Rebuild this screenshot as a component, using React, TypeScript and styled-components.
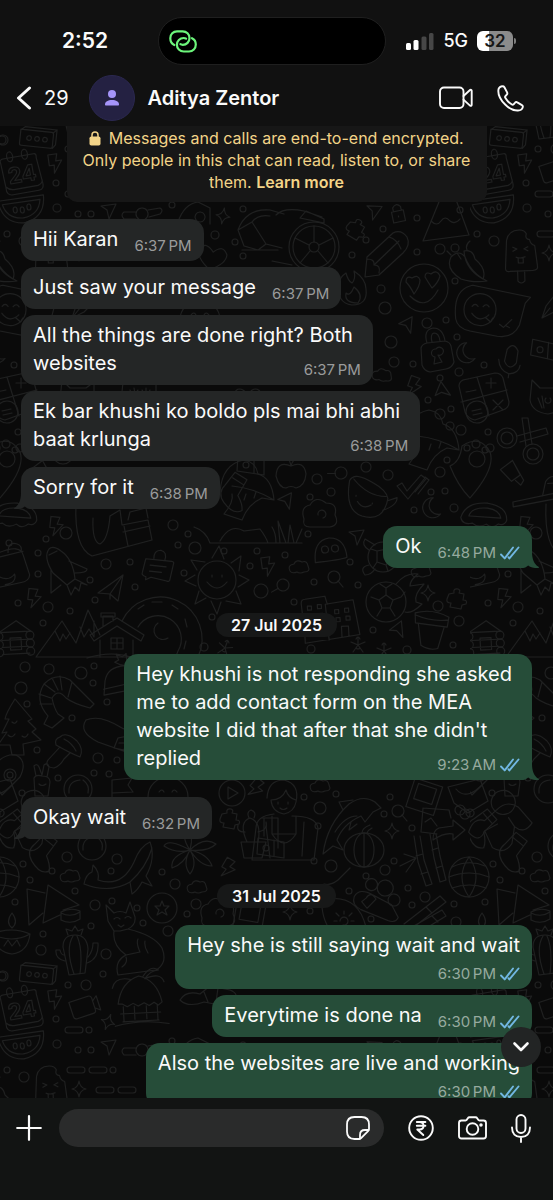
import React from "react";
import styled, { createGlobalStyle, css } from "styled-components";

const GlobalStyle = createGlobalStyle`
  * { box-sizing: border-box; }
  html, body, #root { height: 100%; }
  body {
    margin: 0;
    background: #111111;
    color: #fafafa;
    font-family: Inter, "Liberation Sans", sans-serif;
  }
  button { font: inherit; color: inherit; }
`;

const Screen = styled.div`
  display: grid;
  grid-template-rows: auto minmax(0, 1fr) auto;
  height: 100vh;
  overflow: hidden;
`;

/* ---------- top ---------- */

const Top = styled.header`
  background: #111111;
`;

const StatusBar = styled.div`
  display: grid;
  grid-template-columns: 1fr 228px 1fr;
  align-items: center;
  padding: 17px 10px 0 0;
`;

const Clock = styled.time`
  padding-left: 62px;
  font-size: 21px;
  font-weight: 600;
  line-height: 28px;
`;

const Island = styled.div`
  display: flex;
  align-items: center;
  height: 48px;
  padding-left: 10px;
  border: 1px solid #1f1f1f;
  border-radius: 24px;
  background: #000000;
`;

const Signals = styled.div`
  display: flex;
  align-items: center;
  justify-content: flex-end;
  gap: 9px;
  padding-right: 27px;
  font-size: 18px;
  font-weight: 500;
  line-height: 24px;
`;

const Battery = styled.div`
  display: flex;
  align-items: center;
  gap: 1px;
  &::after {
    content: "";
    width: 2px;
    height: 6px;
    border-radius: 0 2px 2px 0;
    background: #7d7d7d;
  }
`;

const Charge = styled.span`
  width: 36px;
  height: 20px;
  border-radius: 6px;
  background: linear-gradient(to right, #ffffff 32%, #8b8b8b 32%);
  color: #161616;
  font-size: 17px;
  font-weight: 600;
  line-height: 20px;
  text-align: center;
`;

const ChatHeader = styled.div`
  display: flex;
  align-items: center;
  height: 61px;
  padding: 5px 29px 0 16px;
`;

const IconButton = styled.button`
  display: flex;
  flex: none;
  align-items: center;
  padding: 0;
  border: 0;
  background: none;
  cursor: pointer;
`;

const BackButton = styled(IconButton)`
  gap: 12px;
  font-size: 20px;
  line-height: 28px;
`;

const Avatar = styled.div`
  display: flex;
  flex: none;
  align-items: center;
  justify-content: center;
  width: 46px;
  height: 46px;
  margin: 0 13px 0 20px;
  border: 1px solid #2b2850;
  border-radius: 50%;
  background: #242142;
`;

const ContactName = styled.h1`
  flex: 1;
  margin: 0;
  font-size: 20px;
  font-weight: 600;
  line-height: 28px;
  white-space: nowrap;
`;

const CallActions = styled.div`
  display: flex;
  align-items: center;
  gap: 24px;
`;

/* ---------- conversation ---------- */

const Chat = styled.main`
  position: relative;
  display: grid;
  min-height: 0;
  overflow: hidden;
  background: #0a0a0a;
`;

const Wallpaper = styled.svg`
  grid-area: 1 / 1;
  width: 100%;
  height: 100%;
`;

const Thread = styled.div`
  z-index: 0;
  grid-area: 1 / 1;
  display: flex;
  flex-direction: column;
  height: 0;
  padding: 0 21px;
`;

const Notice = styled.p`
  align-self: center;
  width: 420px;
  max-width: 100%;
  margin: 0 0 17px;
  padding: 1px 12px 9px;
  border-radius: 0 0 10px 10px;
  background: #171717;
  color: #f3d488;
  font-size: 16px;
  line-height: 22px;
  text-align: center;
  a {
    color: inherit;
    font-weight: 600;
    text-decoration: none;
  }
  svg {
    margin-right: 3px;
    vertical-align: -2px;
  }
`;

const DayPill = styled.div`
  align-self: center;
  margin: 45px 0 0;
  padding: 0 15px;
  border-radius: 12px;
  background: #171818;
  font-size: 16px;
  font-weight: 600;
  line-height: 24px;
`;

type Placement = "beside" | "inside" | "below";

const Bubble = styled.article<{ $mine?: boolean; $place: Placement; $first?: boolean }>`
  position: relative;
  flex: none;
  align-self: ${(p) => (p.$mine ? "flex-end" : "flex-start")};
  margin-top: ${(p) => (p.$first ? 17 : 6)}px;
  padding: 6px 12px;
  border-radius: 14px;
  background: ${(p) => (p.$mine ? "#264d39" : "#242626")};
  font-size: 20px;
  line-height: 28px;
  white-space: pre;
  ${Notice} + & { margin-top: 0; }
  ${(p) =>
    p.$place === "beside" &&
    css`
      display: flex;
      align-items: flex-end;
      gap: 16px;
    `}
  ${(p) =>
    p.$place === "inside" &&
    css`
      display: grid;
      & > * { grid-area: 1 / 1; }
      & > p { padding-right: 8px; }
    `}
  ${(p) =>
    p.$place === "below" &&
    css`
      display: flex;
      flex-direction: column;
      gap: 4px;
    `}
`;

const Words = styled.p`
  margin: 0 0 2px;
`;

const Line = styled.span`
  display: block;
`;

const Meta = styled.div<{ $mine?: boolean }>`
  display: flex;
  align-items: center;
  align-self: flex-end;
  justify-self: end;
  gap: 4px;
  color: ${(p) => (p.$mine ? "#96aa9f" : "#9a9b9b")};
  font-size: 15px;
  line-height: 18px;
`;

const Tail = styled.svg<{ $mine?: boolean }>`
  position: absolute;
  bottom: 0;
  ${(p) => (p.$mine ? "right: -7px;" : "left: -7px; transform: scaleX(-1);")}
`;

const JumpButton = styled.button`
  position: absolute;
  right: 12px;
  bottom: 31px;
  z-index: 1;
  display: flex;
  align-items: center;
  justify-content: center;
  width: 40px;
  height: 40px;
  padding: 0;
  border: 0;
  border-radius: 50%;
  background: #222424;
  cursor: pointer;
`;

/* ---------- composer ---------- */

const Composer = styled.footer`
  display: flex;
  align-items: center;
  gap: 24px;
  padding: 11px 22px 53px 16px;
  background: #121413;
`;

const Field = styled.div`
  display: flex;
  flex: 1;
  align-items: center;
  min-width: 0;
  height: 38px;
  margin-left: -7px;
  padding: 0 14px 0 16px;
  border-radius: 19px;
  background: #2a2b2b;
`;

const MessageInput = styled.input`
  flex: 1;
  min-width: 0;
  padding: 0;
  border: 0;
  outline: 0;
  background: none;
  color: inherit;
  font: inherit;
`;

/* ---------- wallpaper doodles ---------- */

const shapes: Record<string, React.ReactNode> = {
  box: <><path d="M-18-8 L13-8 Q15-8 15-6 L15 6 Q15 8 13 8 L-16 8 Q-18 8-18 6Z M-17-8 L-14-11 L18-11 L18 4 L15 8 M15-8 L18-11" /><circle cx="-9" r="2.3" /><circle cx="-1" r="2.3" /><circle cx="7" r="2.3" /></>,
  calendar: <><path d="M-19-15 Q-20-19-16-19 L15-19 Q18-19 17-15 L19 10 Q20 18 14 18 L-12 18 Q-19 18-18 10Z M-18 9 Q-15 13-9 13 L14 13 Q19 12 19 8" /><ellipse cx="-9" cy="-20" rx="3" ry="5" /><ellipse cx="6" cy="-20" rx="3" ry="5" /><text x="-14" y="7" fontSize="22" fontWeight="700">24</text></>,
  bolt: <path d="M-6-9 L3-9 L1-2 L7-2 L-2 10 L-1 2 L-6 2Z" />,
  melon: <><path d="M-23-10 L23-10 Q22 13 0 15 Q-21 13-23-10Z M-19-6 L19-6 Q16 9 0 10 Q-16 9-19-6" /><ellipse cx="-7" cy="1" rx="2" ry="3" /><ellipse cy="2" rx="2" ry="3" /><ellipse cx="7" cy="0" rx="2" ry="3" /></>,
  camera: <path d="M-13-9 H7 Q10-9 10-6 V6 Q10 9 7 9 H-10 Q-13 9-13 6Z M10-3 L15-7 V8 L10 4" />,
  sparkle: <path d="M0-8 Q1-1 7 0 Q1 1 0 8 Q-1 1-7 0 Q-1-1 0-8Z" />,
  pill: <rect x="-9" y="-3" width="18" height="6" rx="3" />,
  nav: <path d="M-7-5 L8-7 L1 8 L-1-1Z" />,
  hut: <path d="M-22 2 Q-18-20 0-25 Q18-20 22 2 L18 5 L14 2 L9 5 L4 2 L-2 5 L-7 2 L-13 5 L-18 2Z M-17 5 V20 M17 5 V20 M-20 12 H20 M-18 20 H18 M-6 5 V18 M6 5 V18 M-26 24 Q0 18 28 24 M4-24 Q12-36 20-30 Q12-30 6-22 M6-22 Q22-28 25-18 M-8-22 Q-24-26-27-14" />,
  bone: <path d="M-18-2 H-6 M-18 5 H-6 M-18-2 Q-22 1-18 5 M6-4 L18-6 Q22-4 18 0 L7 3 M0-6 A6 6 0 1 0 .1-6" />,
  popsicle: <path d="M-15 14 L-13-14 Q-11-24 0-24 Q5-24 7-20 Q5-15 10-14 Q11-9 15-8 L17 12 Q18 17 12 17 L-10 17 Q-15 18-15 14Z M-3 17 V27 Q0 31 4 27 V17 M-7-7 L-3-5 L-7-3 M8-7 L4-5 L8-3 M-4 3 Q0 5 5 3 M-2 4 V9 H3 V4" />,
  fox: <path d="M-30-38 L-22-30 Q-16-33-10-30 L-6-41 L-1-26 Q0-18-8-14 Q18-8 26 5 Q32 20 20 27 L-18 32 Q-22 18-10 12 L4 9 M-30-38 L-28-22 L-22-12 L-16-12 L-8-14 M-22-12 Q-24 2-10 12 M-14 24 Q-8 20-10 14 M-22-24 Q-19-27-16-24 M-11-25 Q-8-28-5-25 M4 9 Q0 0 2-4 M12 10 Q8 4 9-2 M-18-18 L-15-16 L-12-18" />,
  cactus: <path d="M-8 22 L-14-6 Q-14-18-2-18 Q10-18 11-4 L8 20Z M-3 21 Q-12-4-4-17 M3 21 Q6-4 0-17 M-12 8 Q-22 6-21-3 L-17-3 Q-16 2-13 2 M11 4 Q16-2 16-10 L21-10 Q22 6 10 10 M-9-18 L-11-24 L-5-22 L-2-27 L1-22 L6-24 L4-18" />,
  lamp: <path d="M-20-4 Q0-12 18-4 Q16 14 0 16 Q-16 14-20-4Z M-20-4 Q0 6 18-4 M0-10 Q-7-16 0-25 Q7-16 0-10 M-8 8 L-4 2 L0 8 L5 2 L8 8" />,
  kites: <path d="M-22-16 L-4-12 M-22-16 L-20 20 L-6 8 M-1-20 L-6 18 L11 10 M-1-20 L30 0 L14 5 M12 7 Q22 2 31 6 L31 14 Q22 20 12 15Z M12 8 Q22 13 31 7" />,
  globe: <><circle r="20" /><path d="M-20 0 Q0-8 20 0 M-17-10 Q0-18 16-11 M-17 11 Q0 5 17 11 M0-20 Q-14 0 0 20 M0-20 Q14 0 0 20" /></>,
  coin: <><circle r="15" /><path d="M0-7 L2-2 L7-2 L3 2 L5 7 L0 4 L-5 7 L-3 2 L-7-2 L-2-2Z" /></>,
  whale: <path d="M-38 16 Q-36 6-30 4 L-29-3 Q-22 4-24 12 Q0 20 12-6 Q18-22 28-26 Q34-10 24 8 L30 18 L20 14 Q16 22 10 26 L8 14 Q-12 26-38 16Z M30-20 Q24 0 8 14" />,
  cloud: <path d="M-9 4 Q-12-2-5-3 Q-3-8 3-5 Q8-7 9-1 Q12 5 5 5 Q1 7-2 5 Q-7 7-9 4Z" />,
  leaves: <path d="M0 0 Q-22-12-26-4 Q-14 4 0 0 Q-20 6-18 18 Q-6 14 0 0 Q-8 14 0 24 Q8 14 0 0 Q10 16 22 16 Q18 4 0 0 Q18 2 26-6 Q14-14 0 0 Q4-16-2-24 Q-10-14 0 0" />,
  boot: <path d="M-32-34 Q-34 10-16 18 L44 2 L40-18 L14-13 L12-28 L2-22 Q0 2-8 6 Q-16 4-15-20 M16-12 L20 8 M15-6 L42-12 M20-18 L22-26 L38-30 L40-20" />,
  plane: <path d="M-16-24 Q-22-16-12 0 L2 12 L10 6 Q8-14-4-22 Q-12-28-16-24Z M-14-4 L-14 20 L-4 12 M4-12 L22-4 Q22 0 10 0 M2 12 L6 22 L10 14 L14 18 L16 10 L22 12 L10 6 M-16-18 Q-12-20-8-22" />,
  paper: <path d="M-14 5 L11-13 L6 13 L-2 6Z M11-13 L-2 6 V11" />,
  note: <path d="M-13-7 L13-7 Q16-7 15-4 L13 12 Q12 14 10 13 L-6 11 L-11 14 L-11 11 Q-16 10-15 7Z M-5-8 Q-6-16 1-17 Q8-16 6-7 M-8-1 H8 M-8 5 H4" />,
  sun: <><circle r="19" /><path d="M-5-22 L2-34 L7-21 M14-17 L24-24 L22-9 M22-5 L32 0 L21 7 M19 11 L24 24 L9 21 M4 22 L0 34 L-6 21 M-11 18 L-22 24 L-18 11 M-21 6 L-32 1 L-22-5 M-20-10 L-26-20 L-12-18 M-10 2 Q0 14 10 2 M-5-5 V-3 M5-5 V-3" /></>,
  bag: <path d="M-15-14 Q8-22 10-10 L15 10 Q14 16 6 17 L-15 20 M-14-10 L10-14 M-5-14 Q-4-25 4-22 Q10-20 8-14 M-15 10 Q-6 15 0 8 Q2 17-10 18" />,
  cabin: <><path d="M-14-6 L4-17 L18-6 M-13-6 H17 M-11 2 H15 M-11 9 H15 M-11 16 H16 M-3 0 H8 V12 H-3Z" /><circle cx="-14" cy="-2" r="4" /><circle cx="-14" cy="6" r="4" /><circle cx="-14" cy="14" r="4" /><circle cx="17" cy="-2" r="4" /><circle cx="17" cy="6" r="4" /><circle cx="17" cy="14" r="4" /></>,
  peaks: <path d="M-36 22 L-10-14 L4 8 L16-25 L28 0 M-17-4 L-12 6 L-9-1 L-6 4 L-2-2 M8-8 L12 2 L17-6 L22 2 L22-14 M-36 22 H60" />,
  house: <path d="M-27-3 L0-20 L27-3 L24 3 L0-12 L-23 3Z M-17 2 V19 M16 2 V19 M-14-12 V-22 H-4 V-17 M-16-25 H-2 V-21 H-16Z M-6 0 H6 V11 H-6Z M0 0 V11 M-6 5 H6 M-30 20 Q-4 12 16 20" />,
  arch: <path d="M-36-10 A39 39 0 0 1 40 26 M-20-4 A22 22 0 0 1 20 20 L17 28 M-20-22 L-14-26 M-6-29 H4 M14-26 L20-22 M27-12 L29-4 M28 10 L26 18 M0-8 A9 9 0 1 0 10 7 A8 8 0 0 1 0-8" />,
  shrimp: <path d="M-12 14 Q-26-2-16-18 Q-4-30 10-22 L34 2 L30 6 Q14 2 6-4 Q-2-14-8-4 Q-6 6-2 12 M-16-18 L-5-10 M-8-24 L-2-12 M0-26 L2-12 M-21-8 L-9-4 M-20 2 L-8 2 M-12 14 L-16 22 L-8 26 L4 16 L-2 12 M12-20 L8-5" />,
  beanie: <><path d="M-17 14 L-15 0 Q-12-14 6-14 Q22-14 22 8 M-17 8 L22 2 M-17 14 L22 9" /><path d="M2-15 L-4-18 L0-20 L-2-26 L4-23 L8-26 L8-20 L12-18 L6-14Z" /></>,
  pine: <path d="M-5-28 Q-14-14-15-8 L-11-8 L-18 6 L-13 5 L-22 18 L-10 18 L-8 28 H4 L3 17 L21 13 L12 5 L16 2 L8-6 L12-8Z M-8-5 Q-5-2-3-6 M-12 8 Q-8 12-5 7 M2 9 Q6 12 8 7" />,
  mushroom: <path d="M-2-14 Q4-20 15-10 Q22-2 18 6 Q8 2-6-6 Q-8-12-2-14Z M-2-4 L-14 9 Q-18 16-8 17 Q-2 15 2 8 L8 2 M2-12 Q10-8 14 0" />,
  board: <path d="M-36-18 Q-22-24 0-10 L38 8 M-36-18 Q-44-6-24 4 L38 26 M-4 0 L6-2 L2 12 L-8 10Z M-3 5 H4" />,
  pin: <><path d="M-20-4 Q-8-22 6-20 Q18-14 10 2 L-8 20 L-12 14" /><circle r="6" /><circle r="3" /></>,
  peace: <path d="M-7 14 L-8-4 Q-6-8 0-6 Q8-6 8 0 L6 14Z M-6-6 L-8-16 Q-5-19-3-15 L0-7 L2-17 Q6-20 7-15 L5-5 M-3 2 Q0 5 4 2" />,
  ball: <><circle r="14" /><path d="M-9 4 Q-10-8 2-9 M5-9 Q12-4 10 4" /></>,
  flag: <path d="M-10 14 V-7 L10-9 L6-2 L11 5 L-10 6" />,
  smile: <><circle r="20" /><path d="M-10 2 Q0 14 10 2 M-9-5 Q-6-9-4-5 M4-5 Q6-9 9-5" /></>,
  play: <><circle r="13" /><path d="M-4-6 L6 0 L-4 6Z" /></>,
  sock: <path d="M-8-18 L6-16 L4 2 Q12 8 14 14 Q8 22-6 14 Q-16 8-12-2Z M-8-12 L5-10" />,
  pots: <path d="M-13 14 L-10 30 H8 L12 14Z M-7 14 Q-16-6-4-10 Q8-6 4 14 M4 4 Q14 2 12-6 M-9 4 Q-18 4-16-3 M-5-10 Q-8-16-3-18 Q3-16 0-10 M8-10 H24 V20 M10-10 V8" />,
  helmet: <><path d="M-16 12 Q-16-10 0-11 Q16-10 16 10 Q10 12-16 12Z" /><circle cx="-5" cy="0" r="3.5" /><circle cx="5" cy="0" r="3.5" /></>,
  lens: <><circle r="6" /><path d="M4 4 L9 10" /></>,
  turtle: <><circle r="15" /><path d="M-8-12 L-18-18 Q-22-12-14-7 M-14 8 Q-24 10-18 18 Q-12 18-8 12 M-6-6 L4-8 L9 0 L3 8 L-6 5Z M-6-6 L-12-8 M4-8 L6-13 M-6 5 L-10 11 M3 8 L5 14" /></>,
  soccer: <><circle r="20" /><path d="M0-7 L7-2 L4 6 L-4 6 L-7-2Z M0-7 V-14 M7-2 L15-5 M4 6 L9 14 M-4 6 L-9 14 M-7-2 L-15-5 M-6-18 L0-14 L6-18 M15-5 L19-10 M10-18 Q20-30 32-28 Q24-22 24-16 L38-18 Q28-8 30 0 L36 2 Q26 12 19 10" /></>,
  blocks: <path d="M-26 18 L-28-16 Q-28-20-24-20 L-4-22 L-2-14 M-2 22 L-4-14 L24-17 L29 18 L-26 24 V18 M-22-13 h4 v4 h-4Z M-12-14 h4 v4 h-4Z M-21-4 h4 v4 h-4Z M-11-5 h4 v4 h-4Z M5-8 h4 v4 h-4Z M15-9 h4 v4 h-4Z M6 0 h4 v4 h-4Z M16-1 h4 v4 h-4Z M11 20 V9 H18 V19" />,
  pot: <path d="M-17-16 Q0-22 17-14 L16-4 L-16-6Z M-13-5 L-9 16 Q0 21 8 18 L13-4 M-17-14 Q0-8 16-11" />,
  puzzle: <path d="M-7-6 L-2-7 Q-3-12 2-11 Q5-10 3-7 L8-6 L7 0 Q12 0 10 4 L6 5 L5 9 L-6 7 L-5 3 Q-10 3-9-1Z" />,
  flower: <path d="M0 0 V-8 M0 0 L7-3 M0 0 L5 7 M0 0 L-5 7 M0 0 L-7-3 M-2-6 Q0-10 2-6 M-2 3 Q0 5 2 3" />,
  girl: <path d="M-13-24 Q-12-42 4-42 Q20-38 16-20 Q14-10 4-8 Q-8-10-9-22 Q2-22 6-32 Q8-24 16-22 M-6-8 Q-24-6-24 6 L-28 38 H34 L38 6 Q36-6 12-6 M-8-6 V12 H16 V-6 M-8 12 Q4 30 16 12 M-14 4 L-10 36 M24 0 L22 34 M-2-20 V-18 M8-20 V-18 M0-14 Q3-11 7-14" />,
  dolphin: <path d="M-24 34 Q-20 4 2-16 Q16-26 28-18 L34-12 L26-8 L18 2 L14-4 Q-4 4-10 20 L-4 30 L-14 26Z M-4-10 L-8-18 L6-20 M10-4 Q-2-4-12 12 M4 2 L2 10 L10 4" />,
  photo: <path d="M-15-14 L14-14 V16 H-15Z M-10-10 H9 V6 H-10Z" />,
  share: <path d="M-16-14 L10-12 L12-4 M-16-14 L-18 10 L-2 12 M-14 0 L-8-4 L-2 4 M0 6 L14 4 V-2 L26 8 L14 18 V12 Q6 10-6 18 Q-6 8 0 6Z" />,
  pumpkin: <><ellipse rx="20" ry="17" /><ellipse rx="10" ry="17" /><path d="M0-17 V17 M-2-17 Q-2-22 6-25 M3-17 Q4-20 8-22 M-14 18 L-26 30 M-26 30 Q-34 36-40 34" /></>,
  gift: <path d="M-20-6 L12-14 L20 8 L0 20 L-14 10 M-20-6 L-14 10 M-12-4 Q-2 8 14-8 M-8 12 a5 5 0 1 0 .1 0 M2 16 a4 4 0 1 0 .1 0" />,
  runner: <path d="M-30 0 Q-22-14-12-8 L2-16 Q14-24 24-14 L34 4 Q24 14 16 4 L10 20 Q0 30-10 20 L-14 2 Q-22 14-30 0Z M10-34 a12 12 0 1 0 .1 0 M-14 2 L0-2 M16 4 L12-6" />,
  bamboo: <path d="M-10-26 L-6 0 L2 24 L8 22 L0-2 L-4-26 M6-28 L10-4 L16 20 L22 18 L16-6 L12-28 M-8-6 L-1-8 M-3 12 L4 10 M8-12 L14-14 M12 6 L18 4 M-8-4 L-20-8 M-8-4 L-24 4 M-8-4 L-18 10" />,
  hand: <><path d="M-30 0 Q-26-10-12-4 L8 4 L16 16 Q14 22 6 20 L-22 12 Q-32 8-30 0Z M-18 0 Q-14-8-8 0 L-16 10 L-22 4Z" /><circle cx="-14" cy="-14" r="6" /><circle cx="0" cy="-12" r="8" /><circle cx="10" cy="-1" r="6" /></>,
  pencils: <path d="M-28 14 L8-14 L14-8 L-18 17 M-20 17 L10 0 L14 6 L-4 17 M-6-3 L0 3 M0 6 L6 12" />,
  ray: <><path d="M-4 0 a4 4 0 1 1 3 4 M0-7 V-10 M7 0 H10 M5-5 L8-8 M-5-5 L-8-8 M-7 0 H-10 M-5 5 L-8 8 M5 5 L8 8" /><path d="M-22-14 Q-20 6-8 14 M-16-22 Q14-26 22 6" /></>,
  wheel: <><circle r="25" /><circle r="21" /><circle r="5" /><path d="M0-5 V-21 M5-2 L19-9 M4 4 L14 16 M-4 4 L-14 16 M-5-2 L-19-9 M-42 14 L-22 18 M-38-32 Q-30-40-10-36 L8-30 M-8-36 L10-28 V-24 L-14-29Z" /></>,
  lock: <><path d="M-15-6 Q-14-10-9-11 L9-13 Q14-12 15-8 L18 8 Q16 14 10 15 L-6 18 Q-12 17-14 11Z M-9-11 Q-13-24-3-26 Q7-26 9-13 M-4-12 Q-6-20-2-21 Q3-21 4-13" /><path d="M0-5 a4 4 0 1 1 2 6 L6 8 L-2 10 L-1 3 A4 4 0 0 1 0-5" /></>,
  lockS: <path d="M-6-3 H6 V8 H-6Z M-4-3 V-7 Q0-12 4-7 V-3 M0 2 V3" />,
  mountain: <path d="M-22 22 L-4-22 H10 L24 16 L-22 22 M-14 2 Q-8 8-4 2 Q0-4 5 2 Q10 6 15 0 M-2-22 L-1-28 M8-22 L7-28" />,
  pencil: <path d="M-22 24 L-20 4 L6-20 Q14-24 20-16 Q24-8 16 0 L-8 22Z M-20 6 Q-12 6-13 12 Q-6 12-8 20 M-13 12 L12-12 M2-16 Q10-14 14-4" />,
  chili: <path d="M-16-8 Q-22 4-6 14 Q6 18 20 16 Q4 8-2-8 Q-8-16-16-8Z M-3-14 Q-2 4 16 14 Q20 4 8-6 Q6-16-3-14Z M-16-10 L-20-14 M0-15 Q-2-20 3-24 M-10-12 L-6-6" />,
  hearts: <><circle r="24" /><path d="M-10 6 Q-14-2-18-6 Q-18-13-12-10 Q-6-14-4-8 Q-4-2-10 6Z M8 0 Q4-6 1-11 Q1-17 7-14 Q13-19 16-12 Q14-5 8 0Z M-14 8 Q2 24 14 2" /></>,
  chat: <><path d="M-36 10 Q-40-20-20-24 L38-14 L33-8 L28 14 Q22 28 6 26 L-20 22 Q-34 20-36 10Z M8 14 L12 17 L20 9 M14 15 L18 17" /><circle cx="-12" r="16" /><path d="M-20 4 Q-12 14-3 5 M-6 8 L-1 12 L1 8 M-20-3 Q-17-7-14-3 M-9-3 Q-6-7-3-3" /></>,
  flame: <path d="M0-18 Q12-10 12 0 Q14 16-2 16 Q-18 14-15-6 Q-14-12-8-16 Q-6-8-2-6 Q2-10 0-18Z M0-2 Q10 6 4 14 Q-10 14-8 4 Q-4 8 0-2" />,
  moon: <path d="M-2-9 A10 10 0 1 0 9 5 A9 9 0 0 1-2-9Z" />,
  mic: <path d="M-5-8 Q0-17 6-8 V4 Q0 14-6 4Z M-12 3 Q-10 14 0 16 Q10 14 10 6 M0 16 V20" />,
  calc: <><path d="M-24-12 Q-24-16-20-18 L12-25 Q18-25 20-20 L26 4 Q26 10 20 12 L-8 22 Q-16 20-18 14Z M-6-21 L6 18 M-22 4 L24-8 M-17-6 L-7-8 M3-15 H13 M8-20 V-10 M10 2 L20 12 M20 2 L10 12" /><circle cx="-6" cy="14" r="11" /><path d="M-11 13 L-2 11 M-10 17 L-1 15" /></>,
  cap: <path d="M-20 4 Q-18-24 4-28 Q16-26 18-14 Q32-10 34 12 Q14 0-8-2 M-8 6 Q-6 14-16 26 L2 32 Q8 16 22 10 L34 12 M4 12 L6 6 M14 10 L16 4" />,
  paw: <><path d="M-22 2 Q-12-2-10-18 Q8-30 18-12 Q24 4-2 34 Q-14 22-22 2Z" /><circle cx="5" cy="-5" r="8" /><circle cx="-5" cy="-16" r="3" /><circle cx="4" cy="-20" r="4" /><circle cx="13" cy="-14" r="3" /></>,
  scissors: <><circle cx="-13" cy="-2" r="10" /><circle cx="-13" cy="-2" r="6" /><circle cx="13" cy="14" r="10" /><circle cx="13" cy="14" r="6" /><path d="M-3-4 L26-12 L28-6 L0 2 M2-22 L8-22 L12 4 M2-22 L6 6" /></>,
  tube: <path d="M-10-8 L4-14 L8 2 L-2 6Z M4-14 L10 8 L6 12 L2 6" />,
  apple: <path d="M0-8 Q-14-14-15 2 Q-12 14-5 14 Q0 11 5 14 Q14 12 15 0 Q13-14 0-8Z M0-8 Q-1-14-4-16 M0-8 Q2-16 8-16" />,
  cup: <><path d="M-24-14 Q-20-24 0-14 Q14-8 16 0 Q14 24-8 20 Q-26 16-24-14Z M-20-16 Q-4 0 14-2 M16 2 L25-2 Q26 6 12 12" /><path d="M-14 6 Q-8 14 0 8 M-16 0 V1 M1 6 V7" /></>,
  ticks: <path d="M-15 0 L-10-3 L-5 5 L9-11 L13-8 L-4 13Z M3 6 L14-7 M6 8 L17-6 L13-9" />,
  bloom: <><path d="M-16 6 Q-20-6-10-8 Q-4-18 6-10 Q18-10 15 2 Q20 12 10 14 H-10 Q-18 14-16 6Z" /><path d="M-2 2 a4 4 0 1 1 5 3" /></>,
  tool: <path d="M-28 12 L30 4 V10 L-28 17Z M2 8 L6-6 Q12-14 20-8 L18 4 M8-4 H18" />,
  burger: <path d="M-24 4 Q-20-12 2-12 Q22-10 22 4 Q20 10 14 8 Q8 14 2 9 Q-6 14-12 9 Q-22 12-24 4Z M-16 2 Q-14-7 2-7 Q14-6 16 2Z" />,
  cat: <path d="M-16-16 L-8-8 H8 L16-14 V8 Q14 16 0 18 Q-16 16-18 4Z M-10 2 L-6 12 M-6 0 L-4 12 M10 2 L6 12 M6 0 V12 M-2 2 a3 3 0 1 0 4 0" />,
  tag: <><path d="M-12-10 L14-6 V10 L-13 6Z M4-8 V8" /><circle cx="-4" r="3" /></>,
  pen: <path d="M12-18 L-4 2 L-8 14 L4 8 L18-6 M-8 14 L0 4" />,
  armchair: <path d="M-24-6 Q-16-28 8-26 L22-22 M-24-6 L-10-14 L4 8 L-4 14 L-18 10Z M-10-14 Q-4-22 8-20 M4 8 L20 12 M-20 14 H16" />,
  heart: <path d="M0 12 Q-16 2-14-6 Q-10-16 0-6 Q8-16 14-6 Q15 3 0 12Z" />,
  fan: <path d="M-16 10 Q-10-8 4-10 L16-4 V12 M-10 10 H-2 M6 0 a5 5 0 1 0 .1 0" />,
  grass: <path d="M-80 8 H12 M-14 8 Q-14-2-18-8 M-10 8 L-12-14 L-4 8 M-2 8 L0-10 L4 8 M6 8 L12-6 M-80 8 Q-84-4-96-8 M-70 6 Q-60-12-46-4 L-30-6 Q-24 2-22 8" />,
  snowboard: <path d="M-30 6 Q-24-4-10 0 L0-8 L20-4 Q30 0 24 8 Q10 12-6 8 Q-22 14-30 6Z M-6-2 L-2 8 M8-6 L6 8" />,
};

/* name, x, y, rotation */
const doodles: Array<[string, number, number, number?]> = [
  ["box", 38, 139, 6], ["calendar", 22, 175, -10], ["bolt", 55, 163, -8], ["melon", 22, 208, -8], ["camera", 84, 171, -18],
  ["sparkle", 108, 186, 20], ["pill", 74, 194], ["hut", 140, 165, -3], ["nav", 108, 211], ["bone", 142, 214], ["pill", 76, 234],
  ["pill", 98, 234], ["sparkle", 79, 253], ["pill", 105, 254], ["pill", 127, 254], ["popsicle", 50, 254, -2], ["fan", 194, 212],
  ["sparkle", 223, 216, 10], ["armchair", 262, 236], ["heart", 212, 258, 12], ["wheel", 314, 247], ["nav", 373, 212, 10],
  ["puzzle", 355, 230, 20], ["lockS", 398, 214, -12], ["mountain", 445, 219], ["pencil", 387, 253], ["chili", 467, 265],
  ["hearts", 424, 288], ["chat", 492, 310, 2], ["flame", 354, 289], ["nav", 407, 326, -20], ["lock", 436, 354], ["moon", 467, 352, 10],
  ["mic", 41, 358, 8], ["tag", 74, 350, 4], ["pen", 80, 304], ["cat", 78, 396], ["cat", 140, 388], ["calc", 483, 398],
  ["nav", 443, 392, -60], ["bolt", 414, 386, 20], ["cloud", 382, 375, 10], ["cap", 425, 438], ["paw", 472, 464], ["scissors", 50, 440],
  ["tube", 42, 475, -14], ["apple", 291, 474], ["lens", 341, 473, 130], ["cup", 372, 497, 6], ["ticks", 412, 486], ["moon", 433, 507, 14],
  ["bloom", 320, 513], ["tool", 70, 488, -4], ["burger", 485, 515, 4], ["nav", 286, 502, -18], ["boot", 108, 538], ["sock", 235, 492, 24],
  ["heart", 248, 400], ["smile", 200, 320], ["tag", 250, 465], ["cap", 240, 488], ["grass", 290, 535], ["bolt", 56, 526, 6],
  ["plane", 65, 573], ["paper", 112, 588], ["note", 158, 567, 6], ["sun", 217, 580], ["bolt", 268, 566, -8], ["bolt", 34, 598, 6], ["bag", 14, 566, -4],
  ["cabin", 13, 638, -3], ["peaks", 72, 635], ["house", 117, 638], ["arch", 158, 631], ["helmet", 330, 549, -6], ["cloud", 299, 567],
  ["lens", 334, 577], ["turtle", 383, 557], ["nav", 356, 537], ["soccer", 386, 602], ["blocks", 330, 618, -3], ["lens", 283, 585, 100],
  ["sparkle", 428, 593], ["puzzle", 456, 600], ["nav", 398, 631, -30], ["pot", 431, 630, 4], ["flower", 358, 645], ["flower", 384, 651],
  ["flower", 225, 648, 20], ["cloud", 421, 571], ["shrimp", 60, 702], ["beanie", 120, 680, -4], ["pine", 20, 727], ["mushroom", 62, 751],
  ["board", 122, 738], ["pin", 10, 775], ["peace", 42, 782], ["ball", 78, 789], ["flag", 122, 787], ["smile", 168, 797], ["play", 232, 793],
  ["puzzle", 229, 820], ["sock", 12, 828, 40], ["bolt", 256, 788, 40], ["pots", 254, 828], ["girl", 280, 822], ["cloud", 320, 786],
  ["dolphin", 347, 820], ["photo", 425, 796, 18], ["share", 439, 822], ["sparkle", 392, 831], ["lens", 398, 811], ["gift", 468, 793],
  ["runner", 498, 826, -12], ["pumpkin", 364, 850], ["whale", 122, 868], ["leaves", 190, 850], ["sock", 44, 852, 30], ["ball", 92, 846],
  ["globe", 469, 877], ["cloud", 70, 876], ["cloud", 197, 887], ["kites", 49, 905], ["coin", 162, 908], ["bamboo", 424, 862],
  ["hand", 384, 900, 6], ["pencils", 432, 910], ["sparkle", 290, 912], ["ray", 344, 921], ["lamp", 12, 938], ["cactus", 77, 953], ["fox", 136, 943],
  ["bolt", 228, 868, 30], ["tag", 270, 848], ["bloom", 218, 912], ["photo", 250, 915, 10], ["heart", 200, 960], ["snowboard", 210, 994],
];

/* x, y, radius */
const dots: Array<[number, number, number]> = [
  [2, 140, 4], [56, 183, 3], [89, 194, 3], [78, 214, 3], [91, 214, 3], [57, 208, 4], [7, 234, 3], [24, 241, 5], [113, 234, 3], [172, 205, 3],
  [215, 235, 4], [235, 242, 3], [243, 256, 3], [243, 209, 3], [383, 229, 3], [366, 240, 3], [352, 255, 3], [417, 218, 3], [417, 252, 3],
  [440, 249, 5], [455, 248, 4], [460, 210, 3], [455, 281, 3], [381, 289, 4], [385, 308, 6], [427, 323, 5], [446, 320, 3], [391, 342, 6],
  [394, 362, 5], [413, 364, 3], [457, 337, 3], [459, 372, 4], [440, 378, 3], [440, 414, 5], [428, 400, 3], [451, 409, 3], [450, 426, 4],
  [461, 430, 5], [447, 460, 3], [366, 467, 5], [317, 479, 5], [388, 475, 5], [440, 472, 5], [431, 492, 3], [445, 491, 3], [454, 508, 4],
  [414, 510, 3], [331, 492, 4], [310, 497, 3], [14, 365, 3], [20, 448, 4], [18, 432, 3], [66, 533, 6], [46, 539, 3], [9, 543, 3], [38, 553, 3],
  [38, 574, 3], [106, 564, 5], [130, 562, 3], [90, 580, 3], [173, 525, 5], [188, 534, 3], [195, 548, 6], [178, 545, 3], [224, 551, 3], [257, 551, 3],
  [184, 573, 3], [135, 587, 3], [250, 566, 3], [18, 603, 3], [48, 607, 5], [70, 611, 3], [95, 600, 3], [43, 623, 3], [212, 617, 3], [204, 647, 4],
  [261, 591, 7], [308, 534, 3], [285, 555, 3], [350, 562, 3], [314, 582, 3], [358, 585, 3], [294, 602, 3], [438, 606, 5], [459, 621, 5], [373, 630, 3],
  [311, 649, 4], [453, 645, 3], [407, 650, 4], [25, 667, 5], [49, 669, 5], [81, 673, 6], [94, 666, 3], [93, 683, 3], [21, 688, 6], [27, 704, 3],
  [107, 702, 3], [72, 718, 3], [37, 750, 3], [98, 758, 5], [117, 760, 3], [94, 773, 3], [109, 774, 3], [58, 778, 3], [22, 793, 3], [336, 794, 3],
  [304, 797, 3], [390, 797, 3], [320, 808, 6], [318, 826, 3], [465, 814, 5], [412, 828, 3], [384, 814, 3], [67, 857, 5], [23, 864, 3], [52, 871, 3],
  [30, 880, 3], [15, 902, 3], [117, 859, 5], [111, 871, 3], [175, 884, 5], [162, 872, 3], [95, 905, 5], [75, 891, 3], [112, 901, 3], [137, 908, 3],
  [91, 926, 3], [143, 923, 3], [43, 934, 3], [41, 950, 5], [106, 954, 5], [103, 974, 3], [86, 985, 5], [168, 931, 5], [187, 914, 3], [196, 904, 5],
  [3, 976, 5], [68, 985, 3], [331, 866, 6], [314, 861, 3], [366, 876, 3], [385, 870, 5], [394, 861, 3], [408, 888, 3], [349, 891, 3], [310, 911, 3],
  [371, 919, 3], [412, 905, 3], [425, 897, 5], [454, 904, 3], [456, 922, 5],
];

const TILE_W = 470;
const TILE_H = 836;

const Doodles = () => (
  <Wallpaper aria-hidden="true">
    <defs>
      <g id="doodle-set">
        {doodles.map(([name, x, y, r = 0], i) => (
          <g key={i} transform={`translate(${x} ${y - 126}) rotate(${r})`}>{shapes[name]}</g>
        ))}
        {dots.map(([x, y, r], i) => <circle key={i} cx={x} cy={y - 126} r={r} />)}
      </g>
      <pattern id="doodles" width={TILE_W} height={TILE_H} patternUnits="userSpaceOnUse">
        <g fill="none" stroke="#1f2020" strokeWidth="1.1" strokeLinejoin="round" strokeLinecap="round">
          {[0, -TILE_W].flatMap((x) =>
            [0, -TILE_H].map((y) => <use key={`${x}${y}`} href="#doodle-set" x={x} y={y} />),
          )}
        </g>
      </pattern>
    </defs>
    <rect width="100%" height="100%" fill="url(#doodles)" />
  </Wallpaper>
);

/* ---------- icons ---------- */

const line = { fill: "none", stroke: "currentColor", strokeLinecap: "round", strokeLinejoin: "round" } as const;

const LinkIcon = () => (
  <svg width="28" height="23" viewBox="0 0 28 23" {...line} stroke="#6cf57b" strokeWidth="2.2">
    <path d="M5.300 15C2.800 13.800 1.300 11.400 1.300 8.200 1.300 4.200 4.200 1.400 8 1.400h5.600c4 0 6.900 2.800 6.900 6.600 0 3.900-2.900 6.800-6.700 6.800-1 0-1.800-.2-2.400-.6" />
    <path d="M23 8.200c2.400 1.100 3.800 3.400 3.800 6.400 0 4-2.900 6.900-6.800 6.900h-5.200c-4 0-6.900-2.900-6.900-6.800C7.900 10.900 10.800 8 14.600 8c1 0 1.900.2 2.500.6" />
  </svg>
);

const SignalIcon = () => (
  <svg width="28" height="18" viewBox="0 0 28 18" fill="#ffffff">
    <rect y="11" width="5" height="7" rx="1.500" />
    <rect x="7.500" y="8" width="5" height="10" rx="1.500" />
    <rect x="15.500" y="4.500" width="5" height="13.500" rx="1.500" fill="#474747" />
    <rect x="23" y="1" width="4.500" height="17" rx="1.500" fill="#474747" />
  </svg>
);

const Ticks = () => (
  <svg width="20" height="14" viewBox="0 0 20 14" {...line} stroke="#71b7e2" strokeWidth="1.900">
    <path d="M1 8.500l3.700 3.900L13 1.500M8.500 11.300l.9 1.100L18.500 1.500" />
  </svg>
);

const BubbleTail = ({ mine }: { mine?: boolean }) => (
  <Tail $mine={mine} width="21" height="16" viewBox="0 0 21 16" aria-hidden="true">
    <path d="M0 16V0h14c0 7 2 12 6.500 14.800.7.500.4 1.200-.5 1.200-4.500 0-7.500-.8-9.800-2.600C8.500 15 6.500 16 3 16z" fill={mine ? "#264d39" : "#242626"} />
  </Tail>
);

/* ---------- messages ---------- */

type Item =
  | { day: string }
  | { text: string[]; time: string; mine?: boolean; place: Placement; first?: boolean; tail?: boolean };

const items: Item[] = [
  { text: ["Hii Karan"], time: "6:37\u202fPM", place: "beside" },
  { text: ["Just saw your message"], time: "6:37\u202fPM", place: "beside" },
  { text: ["All the things are done right? Both", "websites"], time: "6:37\u202fPM", place: "inside" },
  { text: ["Ek bar khushi ko boldo pls mai bhi abhi", "baat krlunga"], time: "6:38\u202fPM", place: "inside" },
  { text: ["Sorry for it"], time: "6:38\u202fPM", place: "beside", tail: true },
  { text: ["Ok"], time: "6:48\u202fPM", mine: true, place: "beside", first: true, tail: true },
  { day: "27 Jul 2025" },
  {
    text: [
      "Hey khushi is not responding she asked",
      "me to add contact form on the MEA",
      "website I did that after that she didn't",
      "replied",
    ],
    time: "9:23\u202fAM", mine: true, place: "inside", first: true, tail: true,
  },
  { text: ["Okay wait"], time: "6:32\u202fPM", place: "beside", first: true, tail: true },
  { day: "31 Jul 2025" },
  { text: ["Hey she is still saying wait and wait"], time: "6:30\u202fPM", mine: true, place: "below", first: true },
  { text: ["Everytime is done na"], time: "6:30\u202fPM", mine: true, place: "beside" },
  { text: ["Also the websites are live and working"], time: "6:30\u202fPM", mine: true, place: "below" },
];

export default function App() {
  return (
    <>
      <GlobalStyle />
      <Screen>
        <Top>
          <StatusBar>
            <Clock>2:52</Clock>
            <Island><LinkIcon /></Island>
            <Signals>
              <SignalIcon />
              <span>5G</span>
              <Battery><Charge>32</Charge></Battery>
            </Signals>
          </StatusBar>
          <ChatHeader>
            <BackButton aria-label="Back, 29 unread">
              <svg width="16" height="24" viewBox="0 0 16 24" {...line} strokeWidth="3"><path d="M13.500 2L2.500 12l11 10" /></svg>
              29
            </BackButton>
            <Avatar>
              <svg width="16" height="18" viewBox="0 0 16 18" fill="#a594f9" aria-hidden="true">
                <circle cx="8" cy="5" r="4" />
                <path d="M1 15.500C1 12.500 4 11 8 11s7 1.500 7 4.500c0 .6-.4 1-1 1H2c-.6 0-1-.4-1-1z" />
              </svg>
            </Avatar>
            <ContactName>Aditya Zentor</ContactName>
            <CallActions>
              <IconButton aria-label="Video call">
                <svg width="34" height="24" viewBox="0 0 34 24" {...line} strokeWidth="1.900">
                  <rect x="1" y="1.500" width="23.500" height="20.500" rx="4" />
                  <path d="M24.500 10l6.500-6c.7-.6 1.700-.2 1.700.8v14c0 1-1 1.400-1.700.8l-6.500-6" />
                </svg>
              </IconButton>
              <IconButton aria-label="Voice call">
                <svg width="27" height="27" viewBox="0 0 27 27" {...line} strokeWidth="1.900">
                  <path d="M4.800 1.300C3 1.700 1.300 3.400 1.300 6c0 4.600 3 9.800 6.900 13.500C12 23.300 17 25.700 21 25.500c2.500-.1 4.400-1.600 4.800-3.400.2-.9-.1-1.500-.9-2l-4.600-2.700c-.8-.5-1.600-.4-2.200.3l-1.500 1.600c-.5.5-1.100.6-1.700.2-2.800-1.600-5.100-4-6.600-6.700-.4-.7-.3-1.300.2-1.800l1.300-1.400c.6-.6.7-1.400.3-2.200L7.400 2.200c-.6-1-1.400-1.200-2.600-.9z" />
                </svg>
              </IconButton>
            </CallActions>
          </ChatHeader>
        </Top>

        <Chat>
          <Doodles />
          <Thread>
            <Notice>
              <svg width="12" height="15" viewBox="0 0 12 15" aria-hidden="true">
                <rect x=".5" y="5.500" width="11" height="9" rx="1.800" fill="#f3d488" />
                <path d="M3 6V4a3 3 0 0 1 6 0v2" fill="none" stroke="#f3d488" strokeWidth="1.500" />
              </svg>{" "}
              Messages and calls are end-to-end encrypted.<br />
              Only people in this chat can read, listen to, or share<br />
              them. <a href="#learn-more">Learn more</a>
            </Notice>
            {items.map((item, i) =>
              "day" in item ? (
                <DayPill key={i}>{item.day}</DayPill>
              ) : (
                <Bubble key={i} $mine={item.mine} $place={item.place} $first={item.first}>
                  {item.tail && <BubbleTail mine={item.mine} />}
                  <Words>{item.text.map((t) => <Line key={t}>{t}</Line>)}</Words>
                  <Meta $mine={item.mine}>
                    <time>{item.time}</time>
                    {item.mine && <Ticks />}
                  </Meta>
                </Bubble>
              ),
            )}
          </Thread>
          <JumpButton aria-label="Scroll to latest">
            <svg width="18" height="12" viewBox="0 0 18 12" {...line} strokeWidth="2.600"><path d="M2.500 2.500L9 9l6.500-6.500" /></svg>
          </JumpButton>
        </Chat>

        <Composer>
          <IconButton aria-label="Attach">
            <svg width="26" height="26" viewBox="0 0 26 26" {...line} strokeWidth="2.200"><path d="M13 1.200v23.600M1.200 13h23.600" /></svg>
          </IconButton>
          <Field>
            <MessageInput type="text" aria-label="Message" />
            <IconButton aria-label="Stickers">
              <svg width="24" height="24" viewBox="0 0 24 24" {...line} strokeWidth="1.800">
                <path d="M13.500 23H8.500C3.500 23 1 20.500 1 15.500v-7C1 3.500 3.500 1 8.500 1h7C20.500 1 23 3.500 23 8.500v4.500c0 .8-.2 1.300-.7 1.800l-7.200 7.400c-.5.5-1 .8-1.600.8z" />
                <path d="M14 22.500v-3.500c0-3.500 1.500-5 5-5h3.500" />
              </svg>
            </IconButton>
          </Field>
          <IconButton aria-label="Payments">
            <svg width="26" height="26" viewBox="0 0 26 26" {...line} strokeWidth="1.900">
              <circle cx="13" cy="13" r="11.800" />
              <path d="M8.800 7h8.600M8.800 10.800h8.600M9 7h2.500c5.400 0 5.400 7.500 0 7.500H9.300l6 5.500" />
            </svg>
          </IconButton>
          <IconButton aria-label="Camera">
            <svg width="29" height="24" viewBox="0 0 29 24" {...line} strokeWidth="1.900">
              <path d="M3.500 4.500h4c.6 0 1-.2 1.300-.7l1-1.600c.4-.7.9-1 1.700-1h6c.8 0 1.300.3 1.700 1l1 1.600c.3.5.7.7 1.300.7h4c1.500 0 2.500 1 2.500 2.500v13c0 1.500-1 2.500-2.500 2.500h-22C2 22.500 1 21.500 1 20V7c0-1.500 1-2.500 2.500-2.500z" />
              <circle cx="14.500" cy="13" r="5.800" />
              <circle cx="23" cy="9" r=".8" fill="currentColor" />
            </svg>
          </IconButton>
          <IconButton aria-label="Voice message">
            <svg width="20" height="29" viewBox="0 0 20 29" {...line} strokeWidth="1.900">
              <rect x="5.500" y="1" width="9" height="18" rx="4.500" />
              <path d="M1 13.500c0 6 3.500 9.500 9 9.500s9-3.500 9-9.500M10 23v5" />
            </svg>
          </IconButton>
        </Composer>
      </Screen>
    </>
  );
}
